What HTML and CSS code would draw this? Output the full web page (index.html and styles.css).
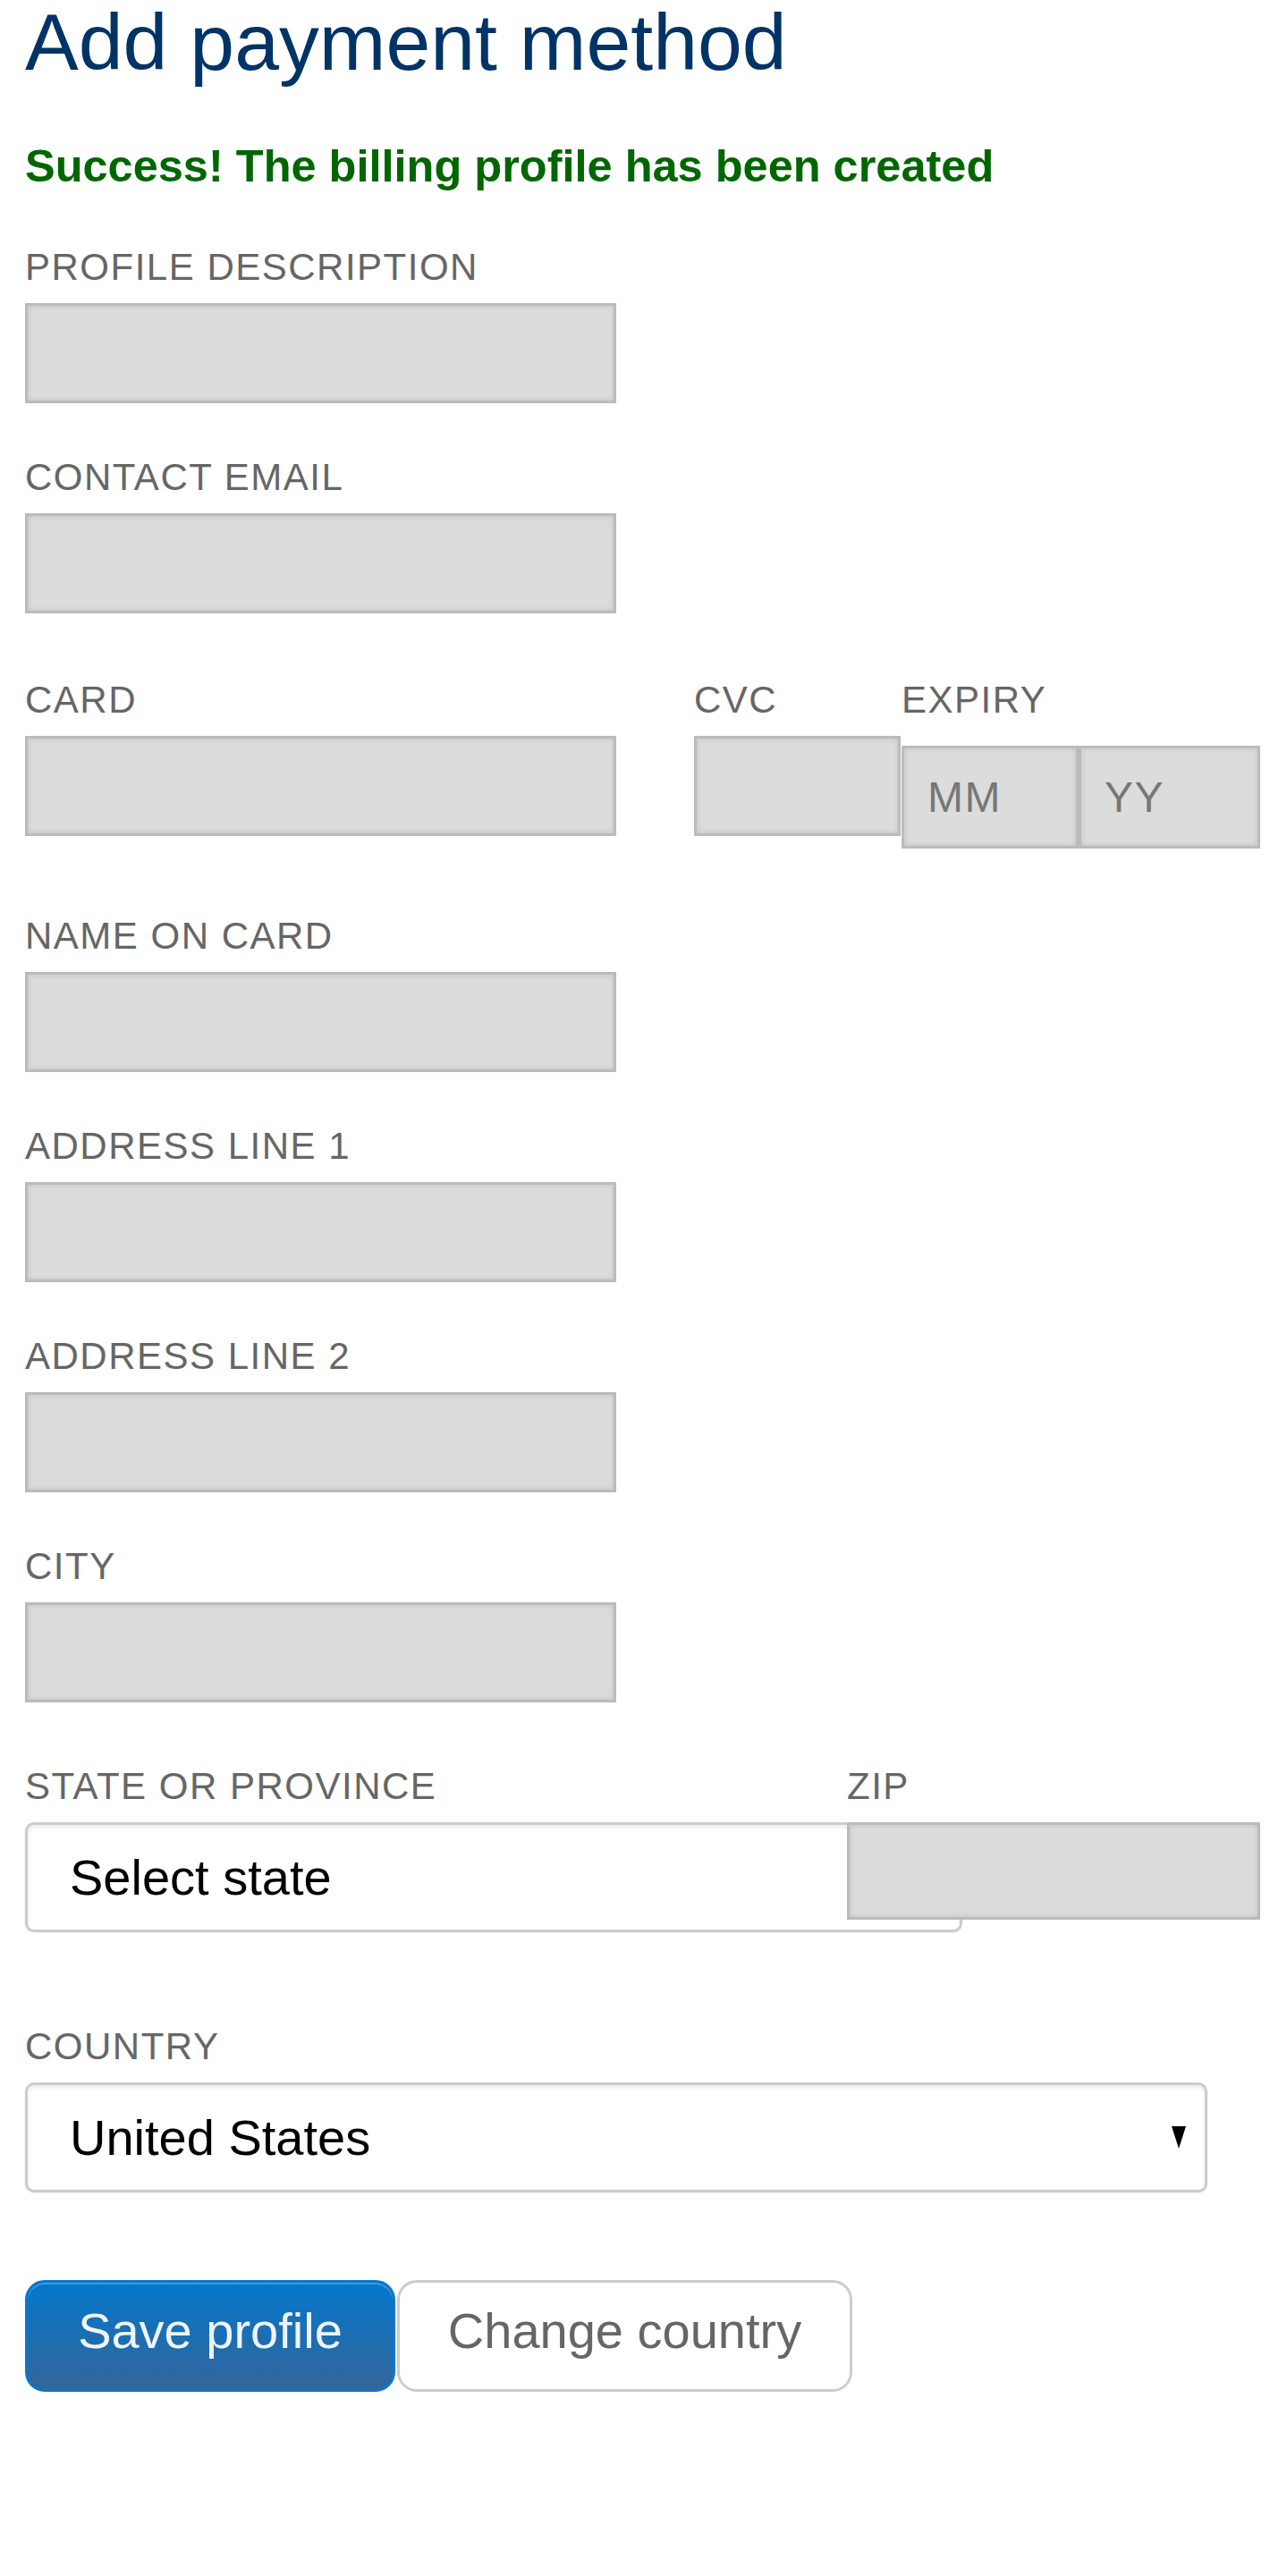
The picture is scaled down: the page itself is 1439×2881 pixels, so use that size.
FILE: index.html
```html
<!DOCTYPE html>
<html lang="en">
<head>
    <meta charset="UTF-8">
    <meta name="viewport" content="width=device-width, initial-scale=1.0">
    <title>Add payment method</title>
    <link rel="stylesheet" href="styles.css">
</head>
<body>
    <h1 class="page-title">Add payment method</h1>
    <p class="notice-success">Success! The billing profile has been created</p>

    <form class="billing-form">
        <div class="field">
            <label for="description">Profile description</label>
            <input type="text" id="description" class="text-input">
        </div>
        <div class="field">
            <label for="email">Contact email</label>
            <input type="email" id="email" class="text-input">
        </div>

        <div class="field-row card-row">
            <div class="field col-card">
                <label for="card">Card</label>
                <input type="text" id="card" class="text-input">
            </div>
            <div class="field col-cvc">
                <label for="cvc">CVC</label>
                <input type="text" id="cvc" class="text-input cvc-input">
            </div>
            <div class="field col-expiry">
                <label for="exp-month">Expiry</label>
                <div class="expiry-inputs">
                    <input type="text" id="exp-month" class="text-input month-input" placeholder="MM">
                    <input type="text" id="exp-year" class="text-input year-input" placeholder="YY">
                </div>
            </div>
        </div>

        <div class="field">
            <label for="name">Name on card</label>
            <input type="text" id="name" class="text-input">
        </div>
        <div class="field">
            <label for="address1">Address line 1</label>
            <input type="text" id="address1" class="text-input">
        </div>
        <div class="field">
            <label for="address2">Address line 2</label>
            <input type="text" id="address2" class="text-input">
        </div>
        <div class="field">
            <label for="city">City</label>
            <input type="text" id="city" class="text-input">
        </div>

        <div class="field-row state-row">
            <div class="field col-state">
                <label for="state">State or province</label>
                <select id="state" class="select-input state-select">
                    <option>Select state</option>
                </select>
            </div>
            <div class="field col-zip">
                <label for="zip">Zip</label>
                <input type="text" id="zip" class="text-input zip-input">
            </div>
        </div>

        <div class="field country-field">
            <label for="country">Country</label>
            <div class="select-wrap">
                <select id="country" class="select-input country-select">
                    <option>United States</option>
                </select>
            </div>
        </div>

        <div class="actions">
            <button type="submit" class="btn btn-primary">Save profile</button>
            <button type="button" class="btn btn-secondary">Change country</button>
        </div>
    </form>
</body>
</html>
```

FILE: styles.css
```css
body {
    margin: 0;
    padding: 2px 28px 0;
    background-color: #fff;
    font-family: "Liberation Sans", Arial, sans-serif;
    color: #333;
}
.page-title {
    margin: 0;
    font-size: 89.6px;
    font-weight: normal;
    line-height: 90px;
    color: #003366;
}
.notice-success {
    margin: 65px 0 0;
    font-size: 50.5px;
    font-weight: bold;
    line-height: 57px;
    color: #006600;
}
.billing-form {
    margin-top: 59px;
}
.field {
    margin-bottom: 57px;
}
.field label {
    display: block;
    margin-bottom: 15px;
    font-size: 42px;
    line-height: 51px;
    letter-spacing: 1.5px;
    text-transform: uppercase;
    color: #666;
}
.text-input {
    display: block;
    box-sizing: border-box;
    width: 661px;
    height: 112px;
    margin: 0;
    padding: 0 26px;
    border: 3px solid #bbb;
    border-radius: 0;
    background-color: #dcdcdc;
    box-shadow: inset 0 0 6px rgba(0, 0, 0, 0.12);
    font-family: inherit;
    font-size: 48px;
    letter-spacing: 1.5px;
    color: #333;
    outline: none;
}
.text-input::placeholder {
    color: #777;
}

/* card / cvc / expiry */
.field-row {
    display: flex;
    align-items: flex-start;
}
.field-row .field {
    margin-bottom: 0;
}
.card-row {
    margin: 71px 0 72px;
}
.col-card {
    width: 748px;
}
.col-cvc {
    width: 232px;
}
.cvc-input {
    width: 231px;
}
.expiry-inputs {
    display: flex;
    padding-top: 11px;
}
.month-input {
    width: 198px;
    height: 115px;
}
.year-input {
    width: 203px;
    height: 115px;
}

/* state / zip */
.state-row {
    margin: 68px 0 102px;
}
.col-state {
    width: 919px;
}
.select-input {
    display: block;
    box-sizing: border-box;
    height: 123px;
    margin: 0;
    padding: 0 47px;
    border: 3px solid #ccc;
    border-radius: 10px;
    background-color: #fff;
    box-shadow: inset 0 3px 4px rgba(0, 0, 0, 0.08), 0 1px 2px rgba(0, 0, 0, 0.08);
    font-family: inherit;
    font-size: 56px;
    color: #000;
    -webkit-appearance: none;
    appearance: none;
    outline: none;
}
.state-select {
    width: 1048px;
}
.zip-input {
    width: 462px;
    height: 109px;
}
.country-field {
    margin-bottom: 98px;
}
.select-wrap {
    position: relative;
    width: 1322px;
}
.country-select {
    width: 100%;
}
.select-wrap::after {
    content: "";
    position: absolute;
    right: 24px;
    top: 49px;
    border-left: 8px solid transparent;
    border-right: 8px solid transparent;
    border-top: 25px solid #000;
    pointer-events: none;
}

/* buttons */
.actions {
    display: flex;
    gap: 2px;
}
.btn {
    box-sizing: border-box;
    height: 125px;
    padding: 0 0 12px;
    border-radius: 22px;
    font-family: inherit;
    font-size: 56px;
    white-space: nowrap;
    text-align: center;
    cursor: pointer;
}
.btn-primary {
    width: 414px;
    border: 3px solid #0a77d0;
    background: linear-gradient(#0477cc, #336699);
    box-shadow: inset 0 2px 0 rgba(255, 255, 255, 0.25);
    color: #eef4fa;
}
.btn-secondary {
    width: 509px;
    border: 3px solid #ccc;
    background-color: #fff;
    color: #666;
}
```
